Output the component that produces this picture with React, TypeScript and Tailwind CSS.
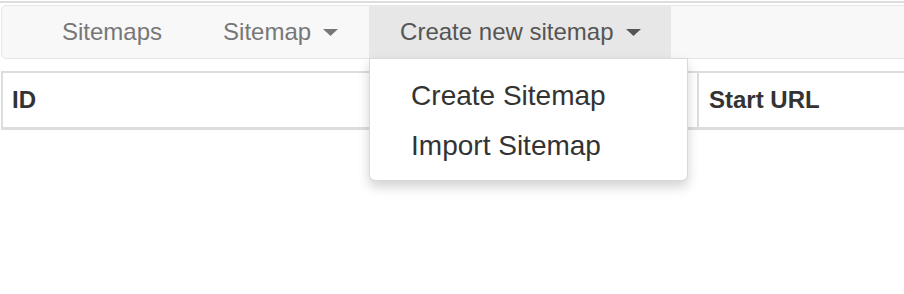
import { useState } from "react";

function Caret() {
  return (
    <svg width="15" height="7" viewBox="0 0 15 7" className="ml-[12px] shrink-0" fill="currentColor">
      <path d="M0 0 L15 0 L7.5 7 Z" />
    </svg>
  );
}

export default function App() {
  const [open] = useState(true);

  return (
    <div className="w-[904px] h-[294px] overflow-hidden bg-white font-['Liberation_Sans',Arial,sans-serif]">
      <div className="mt-[1px] h-[2px] bg-[#dddddd]" />

      <nav className="relative z-10 mt-[2px] ml-[1px] w-[940px] h-[54px] bg-[#f8f8f8] border border-[#e7e7e7] rounded-[5px]">
        <ul className="flex h-full pl-[30px] text-[24px] text-[#777777]">
          <li className="flex items-center px-[30px]">Sitemaps</li>
          <li className="flex items-center pl-[31px] pr-[31px]">
            Sitemap
            <Caret />
          </li>
          <li className="relative flex items-center pl-[31px] pr-[30px] bg-[#e7e7e7] text-[#555555]">
            Create new sitemap
            <Caret />
            {open && (
              <div className="absolute left-0 top-full w-[319px] pt-[12px] pb-[9px] bg-white border border-[rgba(0,0,0,0.15)] rounded-b-[6px] shadow-[0_6px_12px_rgba(0,0,0,0.175)]">
                <div className="pl-[41px] leading-[50px] text-[28px] text-[#333333]">Create Sitemap</div>
                <div className="pl-[41px] leading-[50px] text-[28px] text-[#333333]">Import Sitemap</div>
              </div>
            )}
          </li>
        </ul>
      </nav>

      <div className="mt-[12px] ml-[1px] w-[940px] border-t-2 border-b-[3px] border-l-2 border-[#dddddd]">
        <div className="grid grid-cols-[696px_1fr] h-[54px] text-[24px] font-bold text-[#333333]">
          <div className="flex items-center pl-[9px] border-r-2 border-[#dddddd]">ID</div>
          <div className="flex items-center pl-[10px]">Start URL</div>
        </div>
      </div>
    </div>
  );
}
